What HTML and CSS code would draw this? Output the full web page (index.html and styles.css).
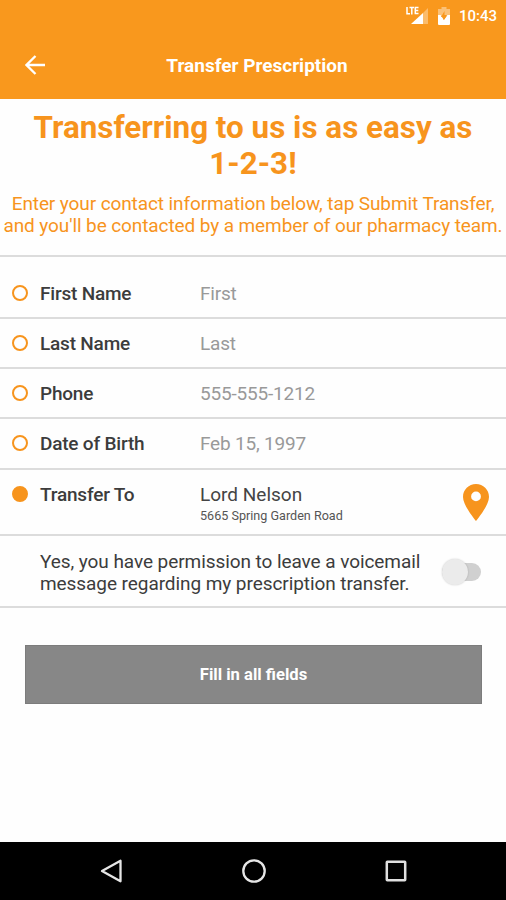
FILE: index.html
```html
<!DOCTYPE html>
<html lang="en">
<head>
  <meta charset="UTF-8">
  <title>Transfer Prescription</title>
  <link rel="stylesheet" href="styles.css">
</head>
<body>

  <header class="header">
    <div class="status-bar">
      <svg class="signal" width="22" height="19" viewBox="0 0 22 19">
        <path d="M22 2v16h-5V7z" fill="#fff" opacity=".35"/>
        <path d="M5 18L17 7v11z" fill="#fff"/>
        <path d="M1 1v6.800h3M3.500 1.500h4.500M5.800 1.500v7M12.500 1.500H9.300v6h3.200M9.300 4.500h3" fill="none" stroke="#fff" stroke-width="1.500"/>
      </svg>
      <svg class="battery" width="12" height="18" viewBox="0 0 12 18">
        <path d="M3.500 0h5v2H12v7H0V2h3.500z" fill="#fff" opacity=".4"/>
        <path d="M0 8h2.500L6 13l3.500-5H12v9q0 1-1 1H1q-1 0-1-1z" fill="#fff"/>
        <path d="M6.500 4L3 10h2.500v3L9 8H6.500z" fill="#f9981d"/>
      </svg>
      <span class="time">10:43</span>
    </div>
    <div class="title-bar">
      <svg class="back" width="20" height="20" viewBox="0 0 20 20">
        <path d="M20 10H1.500M10.500 1L1.500 10l9 9" fill="none" stroke="#fff" stroke-width="2.300"/>
      </svg>
      <div class="title">Transfer Prescription</div>
    </div>
  </header>

  <main>
    <div class="intro">
      <h1>Transferring to us is as easy as<br>1-2-3!</h1>
      <p>Enter your contact information below, tap Submit Transfer,<br>and you'll be contacted by a member of our pharmacy team.</p>
    </div>

    <div class="row first">
      <span class="dot"></span>
      <span class="label">First Name</span>
      <span class="value">First</span>
    </div>
    <div class="row">
      <span class="dot"></span>
      <span class="label">Last Name</span>
      <span class="value">Last</span>
    </div>
    <div class="row">
      <span class="dot"></span>
      <span class="label">Phone</span>
      <span class="value">555-555-1212</span>
    </div>
    <div class="row birth">
      <span class="dot"></span>
      <span class="label">Date of Birth</span>
      <span class="value">Feb 15, 1997</span>
    </div>
    <div class="row store">
      <span class="dot filled"></span>
      <span class="label">Transfer To</span>
      <div class="value">
        <div class="store-name">Lord Nelson</div>
        <div class="address">5665 Spring Garden Road</div>
      </div>
      <svg class="pin" width="26" height="37" viewBox="0 0 26 37">
        <path d="M13 0C5.800 0 0 5.700 0 12.900 0 21.500 13 37 13 37s13-15.500 13-24.100C26 5.700 20.200 0 13 0zm0 17.300a4.900 4.900 0 1 1 0-9.800 4.900 4.900 0 0 1 0 9.800z" fill="#f7941d"/>
      </svg>
    </div>
    <div class="row permission">
      <p>Yes, you have permission to leave a voicemail<br>message regarding my prescription transfer.</p>
      <div class="switch"><span class="thumb"></span></div>
    </div>

    <button class="submit">Fill in all fields</button>
  </main>

  <nav class="nav-bar">
    <svg width="24" height="26" viewBox="0 0 24 26">
      <path d="M3 13L21.500 2.700v20.600z" fill="none" stroke="#e6e6e6" stroke-width="2.300" stroke-linejoin="round"/>
    </svg>
    <svg width="26" height="26" viewBox="0 0 26 26">
      <circle cx="13" cy="13" r="10.700" fill="none" stroke="#e6e6e6" stroke-width="2.300"/>
    </svg>
    <svg width="24" height="26" viewBox="0 0 24 26">
      <rect x="2.800" y="3.800" width="18.400" height="18.400" rx=".5" fill="none" stroke="#e0e0e0" stroke-width="2.500"/>
    </svg>
  </nav>

</body>
</html>
```

FILE: styles.css
```css
* {
  box-sizing: border-box;
}
body {
  margin: 0;
  height: 900px;
  display: flex;
  flex-direction: column;
  overflow: hidden;
  background: #fefefe;
  color: #3c3c3c;
  font-family: Roboto, "Liberation Sans", sans-serif;
  font-size: 19px;
  white-space: nowrap;
}
h1, p {
  margin: 0;
}
.header {
  height: 98.5px;
  background: #f9981d;
  color: #fff;
}
.status-bar {
  height: 32px;
  display: flex;
  align-items: flex-start;
  justify-content: flex-end;
  padding: 6px 9px 0 0;
}
.signal {
  margin-right: -1px;
}
.battery {
  margin: 1px 9px 0 11px;
}
.time {
  font-size: 15px;
  font-weight: 500;
  line-height: 20px;
}
.title-bar {
  height: 66px;
  display: grid;
  grid-template-columns: 45px 1fr 45px;
  align-items: center;
}
.back {
  margin-left: 25px;
}
.title {
  padding-left: 8px;
  font-size: 19px;
  font-weight: 700;
  text-align: center;
}
main {
  flex: 1;
}
.intro {
  height: 158.5px;
  padding-top: 11px;
  border-bottom: 2px solid #dcdcdc;
  color: #f7941d;
  text-align: center;
}
.intro h1 {
  font-size: 31.4px;
  font-weight: 700;
  line-height: 36px;
}
.intro p {
  margin-top: 11px;
  line-height: 22px;
  letter-spacing: -0.1px;
}
.row {
  height: 50px;
  display: flex;
  align-items: flex-start;
  padding: 13px 17px 0 12px;
  border-bottom: 2px solid #dcdcdc;
  line-height: 24px;
}
.first {
  height: 62px;
  padding-top: 25px;
}
.birth {
  height: 51px;
}
.dot {
  width: 16px;
  height: 16px;
  margin: 3px 12px 0 0;
  border: 2px solid #f7941d;
  border-radius: 50%;
}
.filled {
  background: #f7941d;
}
.label {
  width: 160px;
  font-weight: 500;
  letter-spacing: -0.2px;
}
.value {
  flex: 1;
  color: #999;
  letter-spacing: -0.2px;
}
.store {
  height: 66px;
}
.store-name {
  color: #444;
  letter-spacing: 0;
}
.address {
  color: #555;
  font-size: 12.6px;
  line-height: 18px;
  letter-spacing: 0;
}
.pin {
  margin-top: 1px;
}
.permission {
  height: 72px;
  padding: 15px 25px 0 40px;
  justify-content: space-between;
  line-height: 22px;
  letter-spacing: -0.07px;
}
.switch {
  width: 39px;
  height: 18px;
  display: flex;
  align-items: center;
  margin-top: 12px;
  background: #d0d0d0;
  border-radius: 9px;
}
.thumb {
  width: 26px;
  height: 26px;
  border-radius: 50%;
  background: #ebebeb;
  box-shadow: 0 0 2px rgba(0,0,0,0.2);
}
.submit {
  display: block;
  width: 457px;
  height: 59px;
  margin: 37px 0 0 25px;
  padding: 0;
  border: 1px solid #7c7c7c;
  background: #878787;
  color: #fff;
  font: 700 16.6px Roboto, "Liberation Sans", sans-serif;
}
.nav-bar {
  height: 58px;
  display: flex;
  align-items: center;
  justify-content: space-between;
  padding: 0 98px 0 99px;
  background: #000;
}
```
